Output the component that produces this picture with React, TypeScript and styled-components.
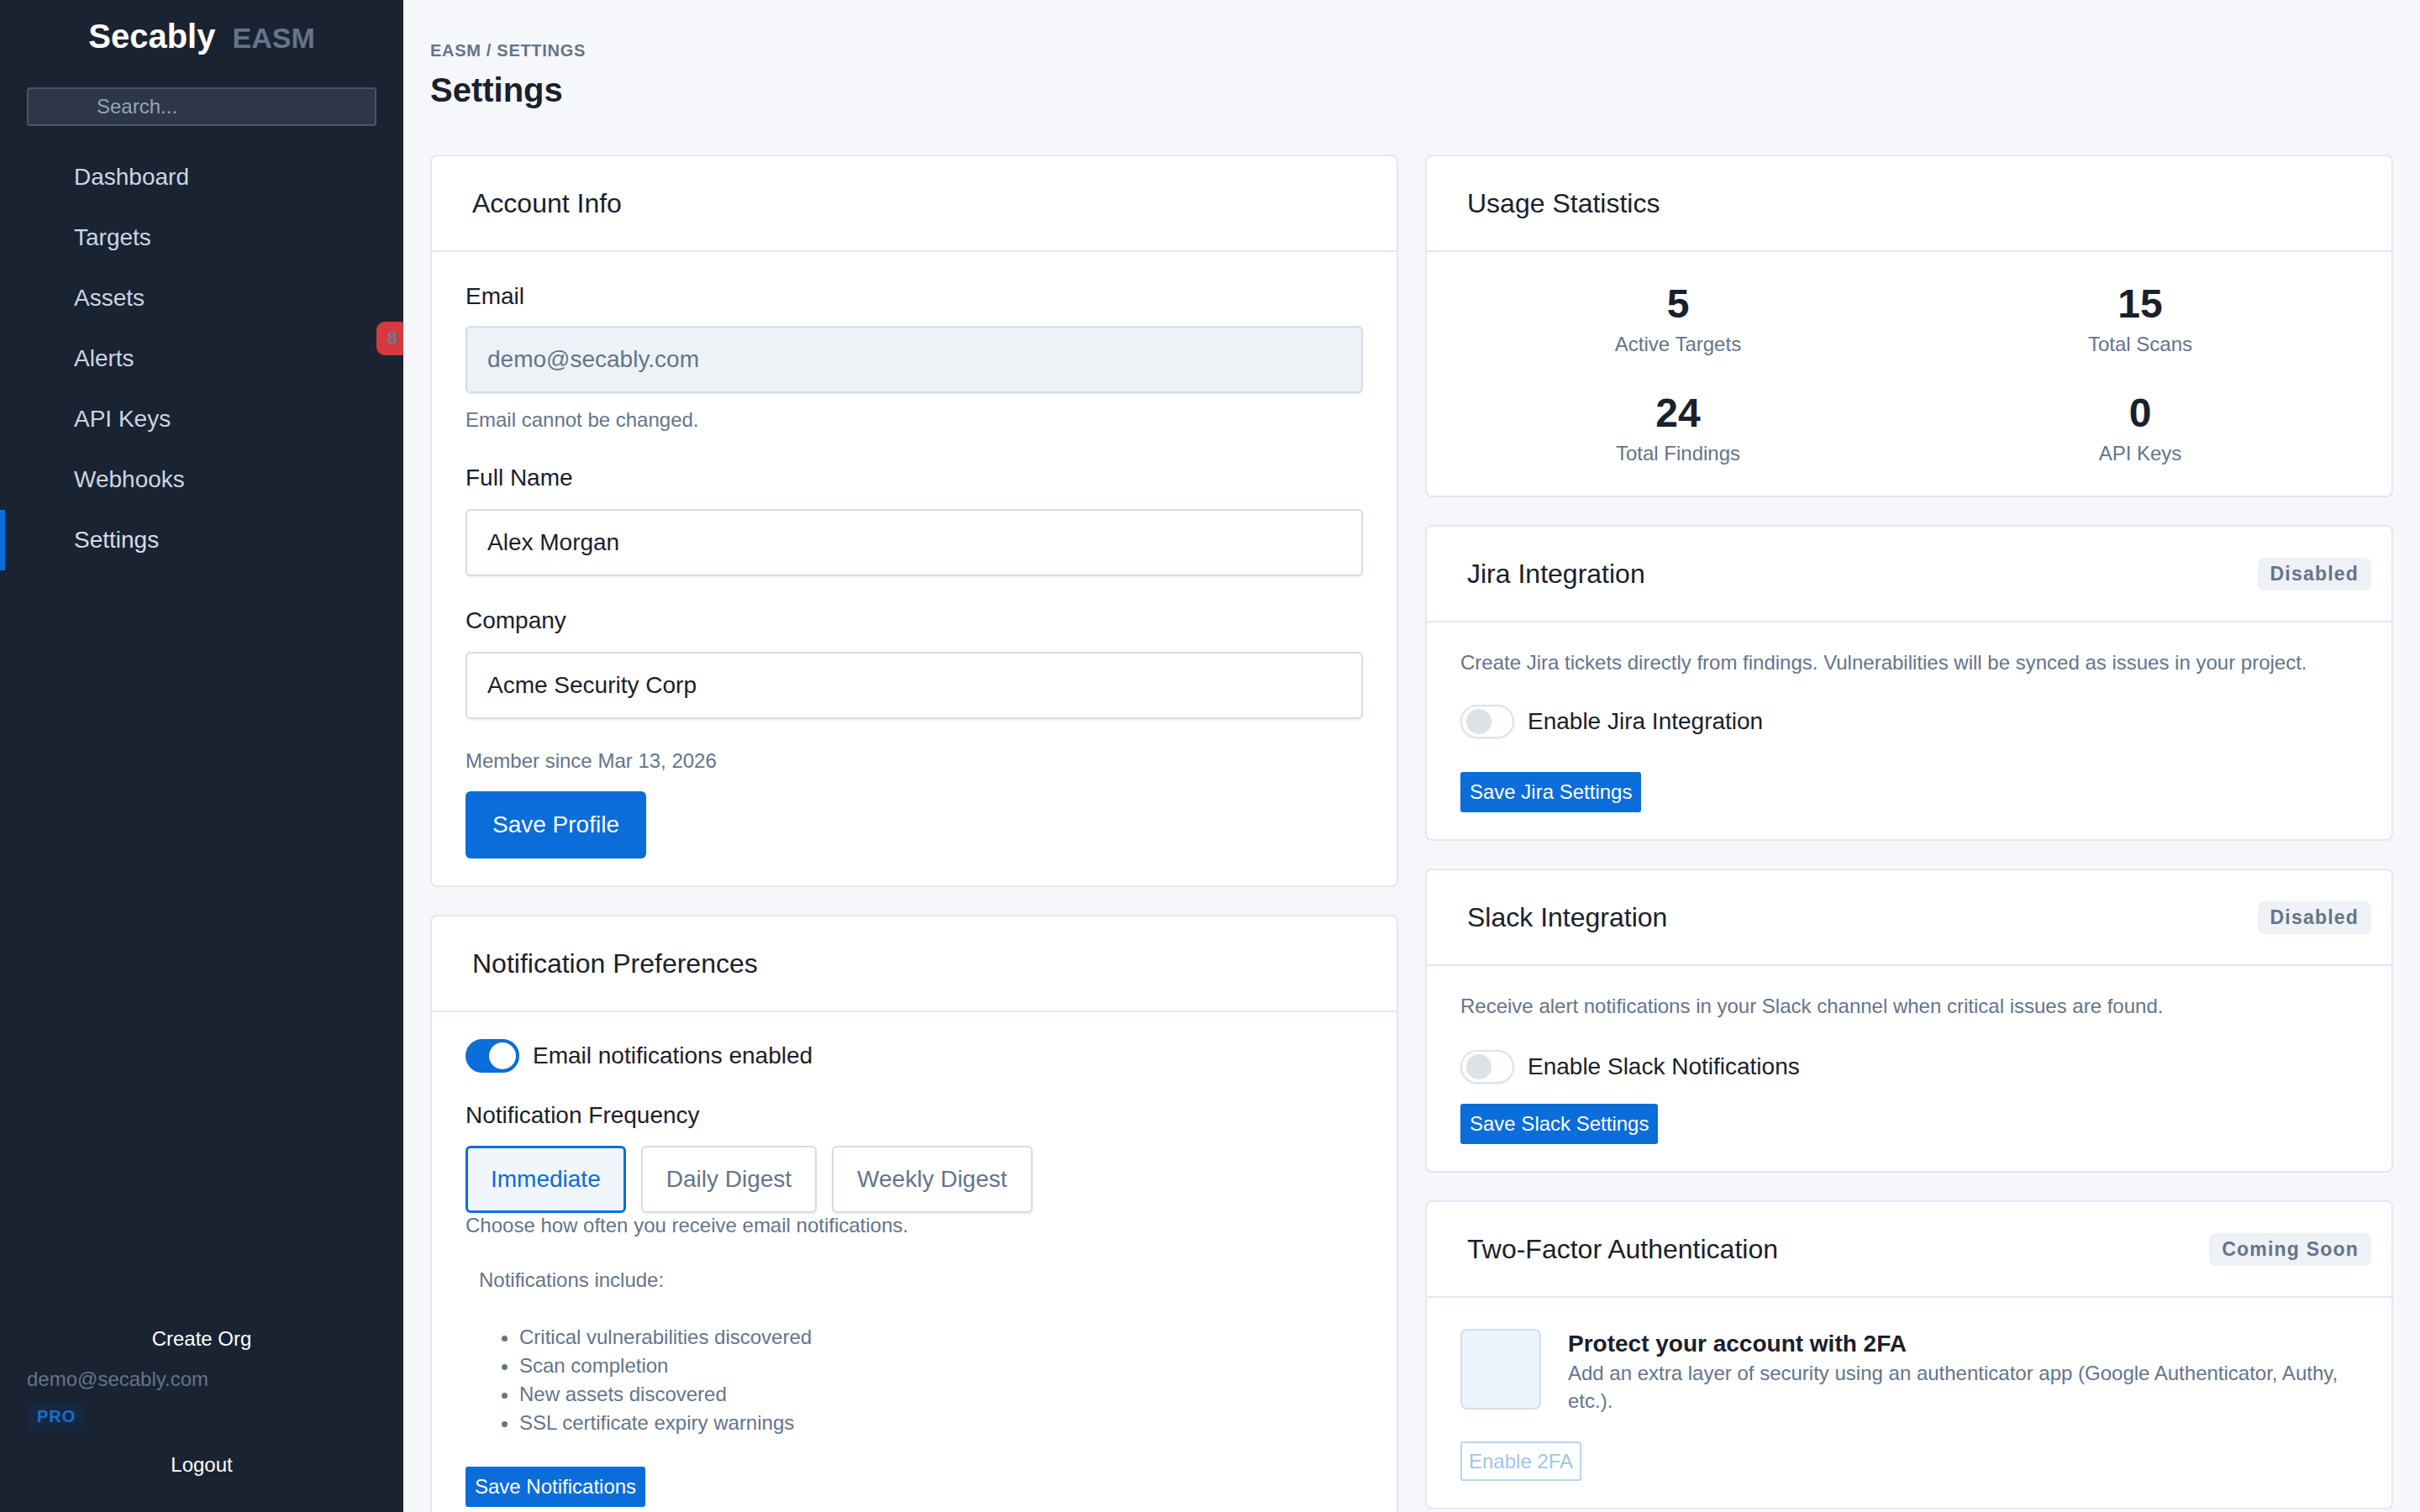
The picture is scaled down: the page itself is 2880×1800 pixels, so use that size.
import React from "react";
import styled, { createGlobalStyle, css } from "styled-components";

const GlobalStyle = createGlobalStyle`
  * { box-sizing: border-box; }
  html, body { margin: 0; padding: 0; }
  body {
    background: #f6f7fa;
    font-family: "Liberation Sans", Arial, sans-serif;
    color: #1a202c;
  }
`;

const Shell = styled.div`
  display: grid;
  grid-template-columns: 480px 1fr;
  height: 100vh;
`;

/* ---------- sidebar ---------- */

const Sidebar = styled.aside`
  height: 100vh;
  background: #1a2332;
  display: flex;
  flex-direction: column;
  overflow: hidden;
`;

const Brand = styled.div`
  height: 86px;
  padding-top: 20px;
  display: flex;
  align-items: baseline;
  justify-content: center;
  gap: 20px;
  line-height: 1.15;
`;

const BrandName = styled.span`
  font-size: 40px;
  font-weight: 700;
  color: #ffffff;
`;

const BrandTag = styled.span`
  font-size: 34px;
  font-weight: 700;
  color: #64748b;
`;

const SearchInput = styled.input`
  margin: 18px 32px 0;
  height: 46px;
  background: #2d3748;
  border: 2px solid #4a5568;
  border-radius: 4px;
  padding: 0 16px 0 81px;
  color: #e2e8f0;
  font-family: inherit;
  font-size: 24px;
  outline: none;
  &::placeholder {
    color: #94a3b8;
  }
`;

const Nav = styled.nav`
  margin-top: 25px;
  display: flex;
  flex-direction: column;
`;

const NavItem = styled.a<{ $active?: boolean }>`
  position: relative;
  display: flex;
  align-items: center;
  height: 72px;
  padding-left: 88px;
  font-size: 28px;
  color: #cbd5e1;
  text-decoration: none;
  ${(p) =>
    p.$active &&
    css`
      box-shadow: inset 6px 0 0 #0a6dd9;
      color: #d5dde7;
    `}
`;

const NavBadge = styled.span`
  position: absolute;
  top: -8px;
  right: -6px;
  width: 38px;
  height: 40px;
  border-radius: 10px;
  background: #d63a3f;
  color: #6b7a90;
  font-size: 22px;
  font-weight: 700;
  display: flex;
  align-items: center;
  justify-content: center;
`;

const SideFooter = styled.div`
  margin-top: auto;
  padding: 0 32px 38px;
  display: flex;
  flex-direction: column;
  align-items: flex-start;
`;

const FooterButton = styled.button<{ $gap?: number }>`
  align-self: stretch;
  margin-top: ${(p) => p.$gap ?? 0}px;
  padding: 0;
  background: none;
  border: 0;
  color: #ffffff;
  font-family: inherit;
  font-size: 24px;
  line-height: 36px;
  text-align: center;
  cursor: pointer;
`;

const UserEmail = styled.div`
  margin-top: 12px;
  font-size: 24px;
  line-height: 36px;
  color: #64748b;
`;

const PlanBadge = styled.span`
  margin-top: 10px;
  height: 33px;
  padding: 0 12px;
  display: inline-flex;
  align-items: center;
  border-radius: 6px;
  background: #162840;
  color: #1a6fd0;
  font-size: 20px;
  font-weight: 700;
  letter-spacing: 1px;
`;

/* ---------- main ---------- */

const Main = styled.main`
  min-width: 0;
  height: 100vh;
  overflow-y: auto;
  scrollbar-width: none;
  padding: 48px 32px 64px;
`;

const Breadcrumb = styled.div`
  font-size: 20px;
  line-height: 24px;
  font-weight: 700;
  letter-spacing: 0.7px;
  text-transform: uppercase;
  color: #64748b;
`;

const PageTitle = styled.h1`
  margin: 11px 0 53px;
  font-size: 40px;
  line-height: 48px;
  font-weight: 700;
  color: #1a202c;
`;

const Columns = styled.div`
  display: grid;
  grid-template-columns: 1fr 1fr;
  gap: 32px;
  align-items: start;
`;

const Column = styled.div`
  display: flex;
  flex-direction: column;
  gap: 33px;
`;

const Card = styled.section`
  background: #ffffff;
  border: 2px solid #e3e8ef;
  border-radius: 8px;
`;

const CardHeader = styled.header`
  height: 114px;
  padding: 0 24px 0 48px;
  display: flex;
  align-items: center;
  justify-content: space-between;
  border-bottom: 2px solid #e3e8ef;
`;

const CardTitle = styled.h2`
  margin: 0;
  font-size: 32px;
  font-weight: 400;
  color: #1a202c;
`;

const StatusBadge = styled.span`
  height: 39px;
  padding: 0 15px;
  display: inline-flex;
  align-items: center;
  border-radius: 8px;
  background: #eef1f5;
  color: #64748b;
  font-size: 23px;
  font-weight: 700;
  letter-spacing: 1.2px;
`;

const CardBody = styled.div<{ $pt?: number }>`
  padding: ${(p) => p.$pt ?? 32}px 40px 32px;
`;

/* ---------- form parts ---------- */

const FieldGroup = styled.div<{ $gap?: number }>`
  margin-top: ${(p) => p.$gap ?? 0}px;
`;

const FieldLabel = styled.label<{ $mb?: number }>`
  display: block;
  margin-bottom: ${(p) => p.$mb ?? 16}px;
  font-size: 28px;
  line-height: 42px;
  color: #1a202c;
`;

const TextInput = styled.input`
  display: block;
  width: 100%;
  height: 80px;
  padding: 0 24px;
  border: 2px solid #d6dce4;
  border-radius: 6px;
  background: #ffffff;
  box-shadow: 0 2px 3px rgba(15, 23, 42, 0.06);
  font-family: inherit;
  font-size: 28px;
  color: #1a202c;
  outline: none;
  &:disabled {
    background: #edf2f7;
    color: #64748b;
  }
`;

const HelpText = styled.p<{ $mt?: number; $lh?: number }>`
  margin: ${(p) => p.$mt ?? 0}px 0 0;
  font-size: 24px;
  line-height: ${(p) => p.$lh ?? 36}px;
  color: #64748b;
`;

const PrimaryButton = styled.button<{ $size?: "lg" | "sm"; $mt?: number }>`
  display: inline-flex;
  align-items: center;
  margin-top: ${(p) => p.$mt ?? 0}px;
  border: 0;
  background: #0a6dd9;
  color: #ffffff;
  font-family: inherit;
  cursor: pointer;
  ${(p) =>
    p.$size === "lg"
      ? css`
          height: 80px;
          padding: 0 32px;
          font-size: 28px;
          border-radius: 6px;
        `
      : css`
          height: 48px;
          padding: 0 11px;
          font-size: 24px;
          border-radius: 3px;
        `}
`;

const OutlineButton = styled.button`
  display: inline-flex;
  align-items: center;
  margin-top: 32px;
  height: 47px;
  padding: 0 8px;
  border: 2px solid #b8d5f4;
  border-radius: 3px;
  background: #ffffff;
  color: #9fc4ee;
  font-family: inherit;
  font-size: 24px;
`;

const ToggleRow = styled.label<{ $mt?: number }>`
  display: flex;
  align-items: center;
  gap: 16px;
  margin-top: ${(p) => p.$mt ?? 0}px;
  font-size: 28px;
  color: #1a202c;
`;

const Switch = styled.span<{ $on?: boolean }>`
  position: relative;
  flex: none;
  width: 64px;
  height: 40px;
  border-radius: 20px;
  ${(p) =>
    p.$on
      ? css`
          background: #0a6dd9;
          border: 2px solid #0a6dd9;
        `
      : css`
          background: #ffffff;
          border: 2px solid #dde3ea;
          box-shadow: 0 1px 3px rgba(15, 23, 42, 0.08);
        `}
  &::after {
    content: "";
    position: absolute;
    top: 50%;
    transform: translateY(-50%);
    border-radius: 50%;
    ${(p) =>
      p.$on
        ? css`
            right: 2px;
            width: 32px;
            height: 32px;
            background: #ffffff;
          `
        : css`
            left: 5px;
            width: 30px;
            height: 30px;
            background: #dde2e8;
          `}
  }
`;

const FreqGroup = styled.div`
  display: flex;
  gap: 18px;
`;

const FreqOption = styled.button<{ $active?: boolean }>`
  height: 80px;
  border-radius: 6px;
  font-family: inherit;
  font-size: 28px;
  cursor: pointer;
  ${(p) =>
    p.$active
      ? css`
          padding: 0 27px;
          border: 3px solid #0a6dd9;
          background: #f1f6fd;
          color: #0a6dd9;
        `
      : css`
          padding: 0 28px;
          border: 2px solid #d6dce4;
          background: #ffffff;
          color: #64748b;
          box-shadow: 0 2px 3px rgba(15, 23, 42, 0.06);
        `}
`;

const IncludeBox = styled.div`
  margin-top: 33px;
  padding-left: 16px;
  color: #64748b;
  font-size: 24px;
  line-height: 34px;
`;

const IncludeTitle = styled.p`
  margin: 0;
`;

const IncludeList = styled.ul`
  margin: 34px 0 0;
  padding-left: 48px;
`;

/* ---------- usage stats ---------- */

const StatGrid = styled.div`
  display: grid;
  grid-template-columns: 1fr 1fr;
  column-gap: 32px;
  row-gap: 34px;
`;

const Stat = styled.div`
  text-align: center;
`;

const StatValue = styled.div`
  font-size: 48px;
  line-height: 60px;
  font-weight: 700;
  color: #1a202c;
`;

const StatLabel = styled.div`
  font-size: 24px;
  line-height: 36px;
  color: #64748b;
`;

/* ---------- 2FA ---------- */

const TwoFARow = styled.div`
  display: flex;
  align-items: flex-start;
  gap: 32px;
`;

const IconBox = styled.div`
  flex: none;
  width: 96px;
  height: 96px;
  border: 2px solid #d5dee9;
  border-radius: 8px;
  background: #ebf3fc;
`;

const TwoFATitle = styled.div`
  font-size: 28px;
  line-height: 36px;
  font-weight: 700;
  color: #1a202c;
`;

const TwoFAText = styled.p`
  margin: 0;
  font-size: 24px;
  line-height: 33px;
  color: #64748b;
`;

const navItems = ["Dashboard", "Targets", "Assets", "Alerts", "API Keys", "Webhooks", "Settings"];

const stats = [
  { value: "5", label: "Active Targets" },
  { value: "15", label: "Total Scans" },
  { value: "24", label: "Total Findings" },
  { value: "0", label: "API Keys" },
];

const includes = [
  "Critical vulnerabilities discovered",
  "Scan completion",
  "New assets discovered",
  "SSL certificate expiry warnings",
];

export default function App() {
  return (
    <>
      <GlobalStyle />
      <Shell>
        <Sidebar>
          <Brand>
            <BrandName>Secably</BrandName>
            <BrandTag>EASM</BrandTag>
          </Brand>
          <SearchInput placeholder="Search..." />
          <Nav>
            {navItems.map((item) => (
              <NavItem key={item} href="#" $active={item === "Settings"}>
                {item}
                {item === "Alerts" && <NavBadge>8</NavBadge>}
              </NavItem>
            ))}
          </Nav>
          <SideFooter>
            <FooterButton>Create Org</FooterButton>
            <UserEmail>demo@secably.com</UserEmail>
            <PlanBadge>PRO</PlanBadge>
            <FooterButton $gap={23}>Logout</FooterButton>
          </SideFooter>
        </Sidebar>

        <Main>
          <Breadcrumb>EASM / Settings</Breadcrumb>
          <PageTitle>Settings</PageTitle>

          <Columns>
            <Column>
              <Card>
                <CardHeader>
                  <CardTitle>Account Info</CardTitle>
                </CardHeader>
                <CardBody>
                  <FieldGroup>
                    <FieldLabel $mb={14}>Email</FieldLabel>
                    <TextInput value="demo@secably.com" disabled readOnly />
                    <HelpText $mt={14}>Email cannot be changed.</HelpText>
                  </FieldGroup>
                  <FieldGroup $gap={30}>
                    <FieldLabel>Full Name</FieldLabel>
                    <TextInput defaultValue="Alex Morgan" />
                  </FieldGroup>
                  <FieldGroup $gap={32}>
                    <FieldLabel>Company</FieldLabel>
                    <TextInput defaultValue="Acme Security Corp" />
                  </FieldGroup>
                  <HelpText $mt={32}>Member since Mar 13, 2026</HelpText>
                  <PrimaryButton $size="lg" $mt={18}>
                    Save Profile
                  </PrimaryButton>
                </CardBody>
              </Card>

              <Card>
                <CardHeader>
                  <CardTitle>Notification Preferences</CardTitle>
                </CardHeader>
                <CardBody>
                  <ToggleRow>
                    <Switch $on />
                    Email notifications enabled
                  </ToggleRow>
                  <FieldGroup $gap={30}>
                    <FieldLabel $mb={15}>Notification Frequency</FieldLabel>
                    <FreqGroup>
                      <FreqOption $active>Immediate</FreqOption>
                      <FreqOption>Daily Digest</FreqOption>
                      <FreqOption>Weekly Digest</FreqOption>
                    </FreqGroup>
                    <HelpText $lh={30}>Choose how often you receive email notifications.</HelpText>
                  </FieldGroup>
                  <IncludeBox>
                    <IncludeTitle>Notifications include:</IncludeTitle>
                    <IncludeList>
                      {includes.map((item) => (
                        <li key={item}>{item}</li>
                      ))}
                    </IncludeList>
                  </IncludeBox>
                  <PrimaryButton $mt={35}>Save Notifications</PrimaryButton>
                </CardBody>
              </Card>
            </Column>

            <Column>
              <Card>
                <CardHeader>
                  <CardTitle>Usage Statistics</CardTitle>
                </CardHeader>
                <CardBody>
                  <StatGrid>
                    {stats.map((s) => (
                      <Stat key={s.label}>
                        <StatValue>{s.value}</StatValue>
                        <StatLabel>{s.label}</StatLabel>
                      </Stat>
                    ))}
                  </StatGrid>
                </CardBody>
              </Card>

              <Card>
                <CardHeader>
                  <CardTitle>Jira Integration</CardTitle>
                  <StatusBadge>Disabled</StatusBadge>
                </CardHeader>
                <CardBody $pt={30}>
                  <HelpText>
                    Create Jira tickets directly from findings. Vulnerabilities will be synced as issues in your project.
                  </HelpText>
                  <ToggleRow $mt={32}>
                    <Switch />
                    Enable Jira Integration
                  </ToggleRow>
                  <PrimaryButton $mt={40}>Save Jira Settings</PrimaryButton>
                </CardBody>
              </Card>

              <Card>
                <CardHeader>
                  <CardTitle>Slack Integration</CardTitle>
                  <StatusBadge>Disabled</StatusBadge>
                </CardHeader>
                <CardBody $pt={30}>
                  <HelpText>Receive alert notifications in your Slack channel when critical issues are found.</HelpText>
                  <ToggleRow $mt={34}>
                    <Switch />
                    Enable Slack Notifications
                  </ToggleRow>
                  <PrimaryButton $mt={24}>Save Slack Settings</PrimaryButton>
                </CardBody>
              </Card>

              <Card>
                <CardHeader>
                  <CardTitle>Two-Factor Authentication</CardTitle>
                  <StatusBadge>Coming Soon</StatusBadge>
                </CardHeader>
                <CardBody $pt={37}>
                  <TwoFARow>
                    <IconBox />
                    <div>
                      <TwoFATitle>Protect your account with 2FA</TwoFATitle>
                      <TwoFAText>
                        Add an extra layer of security using an authenticator app (Google Authenticator, Authy, etc.).
                      </TwoFAText>
                    </div>
                  </TwoFARow>
                  <OutlineButton disabled>Enable 2FA</OutlineButton>
                </CardBody>
              </Card>
            </Column>
          </Columns>
        </Main>
      </Shell>
    </>
  );
}
